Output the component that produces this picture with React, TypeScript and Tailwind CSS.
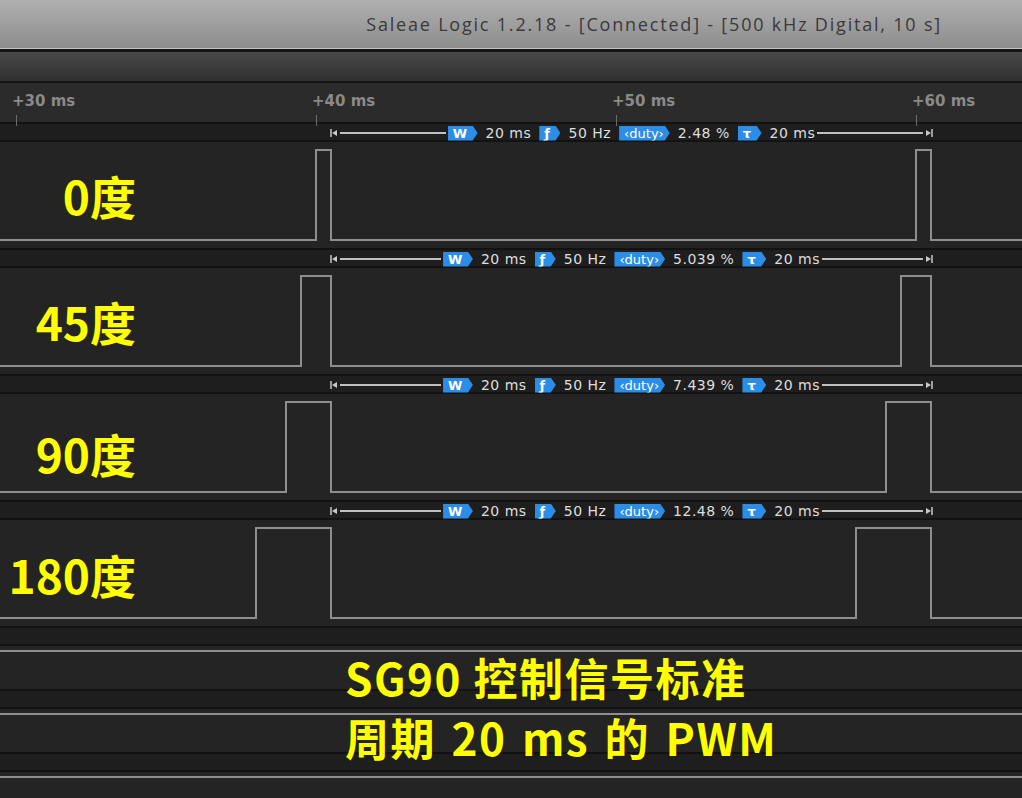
const channels = [
  { label: "0度", duty: "2.48 %", rise: 316, shift: "pt-[0px]" },
  { label: "45度", duty: "5.039 %", rise: 301, shift: "pt-[0px]" },
  { label: "90度", duty: "7.439 %", rise: 286, shift: "pt-[12px]" },
  { label: "180度", duty: "12.48 %", rise: 256, shift: "pt-[2px]" },
];

const ticks = [
  { x: 12, text: "+30 ms" },
  { x: 312, text: "+40 ms" },
  { x: 612, text: "+50 ms" },
  { x: 912, text: "+60 ms" },
];

const Sep = () => <div className="h-[2px] bg-[#121212]" />;

const Badge = ({ children, wide }: { children: React.ReactNode; wide?: boolean }) => (
  <div
    className={`flex h-[15px] items-center bg-[#2b8de6] pl-[5px] text-[13px] font-bold leading-none text-white [clip-path:polygon(0_0,calc(100%-5px)_0,100%_50%,calc(100%-5px)_100%,0_100%)] ${
      wide ? "pl-[3px] pr-[6px]" : "pr-[10px]"
    }`}
  >
    {children}
  </div>
);

const MeasRow = ({ duty }: { duty: string }) => (
  <div className="h-[16px] bg-[#1e1e1e] pt-[2px]">
    <div className="ml-[330px] flex h-[14px] w-[603px] items-center">
      <svg width="10" height="10" viewBox="0 0 10 10" className="shrink-0">
        <line x1="1" y1="1" x2="1" y2="9" stroke="#c8c8c8" strokeWidth="1.5" />
        <path d="M2 5 L7 2 L7 8 Z" fill="#c8c8c8" />
      </svg>
      <div className="h-[1.5px] flex-1 bg-[#c0c0c0]" />
      <div className="flex items-center gap-[8px] px-[2px] font-['DejaVu_Sans',sans-serif] text-[14px] tracking-[0.5px] text-[#dedede]">
        <Badge>W</Badge>
        <span>20 ms</span>
        <Badge>ƒ</Badge>
        <span>50 Hz</span>
        <Badge wide>
          <span className="font-normal tracking-[0px]">‹duty›</span>
        </Badge>
        <span>{duty}</span>
        <Badge>τ</Badge>
        <span>20 ms</span>
      </div>
      <div className="h-[1.5px] flex-1 bg-[#c0c0c0]" />
      <svg width="10" height="10" viewBox="0 0 10 10" className="shrink-0">
        <path d="M8 5 L3 2 L3 8 Z" fill="#c8c8c8" />
        <line x1="9" y1="1" x2="9" y2="9" stroke="#c8c8c8" strokeWidth="1.5" />
      </svg>
    </div>
  </div>
);

const Wave = ({ rise }: { rise: number }) => {
  const pts = [
    [0, 98],
    [rise, 98],
    [rise, 8],
    [331, 8],
    [331, 98],
    [rise + 600, 98],
    [rise + 600, 8],
    [931, 8],
    [931, 98],
    [1022, 98],
  ]
    .map((p) => p.join(","))
    .join(" ");
  return (
    <svg
      className="absolute inset-0"
      width="1022"
      height="106"
      viewBox="0 0 1022 106"
      shapeRendering="crispEdges"
    >
      <polyline points={pts} fill="none" stroke="#8e8e8e" strokeWidth="2" />
    </svg>
  );
};

const EmptyChannel = ({ height }: { height: string }) => (
  <div>
    <Sep />
    <div className="h-[16px] bg-[#1e1e1e]" />
    <Sep />
    <div className={`${height} bg-[#242424] pt-[4px]`}>
      <div className="h-[2px] bg-[#8e8e8e]" />
    </div>
  </div>
);

const App = () => {
  return (
    <div className="relative h-[798px] w-[1022px] overflow-hidden bg-[#242424]">
      {/* window title */}
      <div className="flex h-[48px] items-center justify-end bg-gradient-to-b from-[#b0b0b0] to-[#8d8d8d] pr-[80px]">
        <span className="font-['Open_Sans',sans-serif] text-[18px] tracking-[1.8px] text-[#3a3a3a]">
          Saleae Logic 1.2.18 - [Connected] - [500 kHz Digital, 10 s]
        </span>
      </div>
      <div className="h-[1px] bg-[#c4c4c4]" />
      <div className="h-[3px] bg-[#151515]" />
      {/* toolbar */}
      <div className="h-[29px] bg-gradient-to-b from-[#4a4a4a] to-[#303030]" />
      <div className="h-[2px] bg-[#141414]" />
      {/* time ruler */}
      <div className="relative h-[39px] bg-[#2b2b2b]">
        {ticks.map((t) => (
          <div key={t.x} className="absolute top-0 flex flex-col" style={{ left: t.x }}>
            <span className="pt-[11px] font-['DejaVu_Sans',sans-serif] text-[15px] font-bold leading-none text-[#8a8a8a]">
              {t.text}
            </span>
            <div className="ml-[4px] mt-[6px] h-[11px] w-[1px] bg-[#6c6c6c]" />
          </div>
        ))}
      </div>

      {channels.map((c) => (
        <div key={c.label}>
          <Sep />
          <MeasRow duty={c.duty} />
          <Sep />
          <div className="relative h-[106px] bg-[#242424]">
            <Wave rise={c.rise} />
            <div
              className={`relative flex h-full w-[136px] items-center justify-end font-['Noto_Sans_CJK_SC',sans-serif] text-[46px] font-bold text-[#ffff00] ${c.shift}`}
            >
              {c.label}
            </div>
          </div>
        </div>
      ))}

      <EmptyChannel height="h-[43px]" />
      <EmptyChannel height="h-[43px]" />
      <EmptyChannel height="h-[43px]" />

      {/* annotation */}
      <div className="absolute left-[345px] top-[647px] flex flex-col font-['Noto_Sans_CJK_SC',sans-serif] text-[44px] font-bold leading-[60px] tracking-[1.5px] text-[#ffff00]">
        <span>SG90 控制信号标准</span>
        <span className="[word-spacing:4px]">周期 20 ms 的 PWM</span>
      </div>
    </div>
  );
};

export default App;
